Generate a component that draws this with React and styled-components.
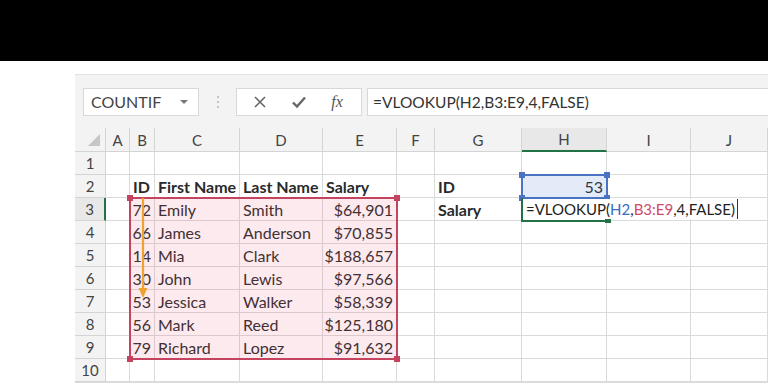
import React from 'react'
import styled, { createGlobalStyle } from 'styled-components'

const GlobalStyle = createGlobalStyle`
  body {
    margin: 0;
    background: #fff;
    font-family: Lato, "Noto Sans", sans-serif;
    overflow: hidden;
  }
`

const TopBar = styled.div`
  height: 61px;
  background: #000;
`

const Stage = styled.div`
  padding: 13px 0 0 75px;
`

const Sheet = styled.div`
  background: #f3f3f3;
  border-top: 1px solid #e2e2e2;
`

const Toolbar = styled.div`
  display: flex;
  align-items: center;
  height: 53px;
  padding-left: 8px;
`

const NameBox = styled.div`
  display: flex;
  align-items: center;
  justify-content: space-between;
  box-sizing: border-box;
  width: 116px;
  height: 28px;
  padding: 0 10px 0 7px;
  background: #fff;
  border: 1px solid #d8d8d8;
  color: #444;
  font-size: 16px;
`

const Caret = styled.span`
  width: 0;
  height: 0;
  border-left: 4px solid transparent;
  border-right: 4px solid transparent;
  border-top: 4px solid #777;
`

const Grip = styled.div`
  display: flex;
  flex-direction: column;
  align-items: center;
  gap: 3px;
  width: 37px;

  span {
    width: 2px;
    height: 2px;
    background: #c4c4c4;
  }
`

const FxButtons = styled.div`
  display: flex;
  align-items: center;
  justify-content: space-around;
  box-sizing: border-box;
  width: 126px;
  height: 28px;
  padding: 0 6px 0 4px;
  background: #fff;
  border: 1px solid #d8d8d8;
  color: #666;
`

const Fx = styled.span`
  font-family: "Liberation Serif", serif;
  font-style: italic;
  font-size: 16px;
  color: #555;
`

const FormulaInput = styled.div`
  display: flex;
  align-items: center;
  flex: 1;
  box-sizing: border-box;
  height: 28px;
  margin-left: 5px;
  padding-left: 5px;
  background: #fff;
  border: 1px solid #d8d8d8;
  border-right: none;
  color: #333;
  font-size: 15.5px;
`

const Grid = styled.div`
  position: relative;
  display: grid;
  grid-template-columns: 31px 24px 25px 85px 83px 74px 38px 87px 85px 84px 1fr;
  grid-template-rows: 24px repeat(10, 23px);
  background: #fff;
  border-bottom: 1px solid #dcdcdc;
`

const Corner = styled.div`
  position: relative;
  background: #f3f3f3;
  border-right: 1px solid #d4d4d4;
  border-bottom: 1px solid #d4d4d4;

  &::after {
    content: '';
    position: absolute;
    right: 5px;
    bottom: 5px;
    border-left: 12px solid transparent;
    border-bottom: 12px solid #c6c6c6;
  }
`

const ColHeader = styled.div`
  display: flex;
  align-items: center;
  justify-content: center;
  box-sizing: border-box;
  background: ${p => (p.$active ? '#e8e8e8' : '#f3f3f3')};
  border-right: 1px solid #d4d4d4;
  border-bottom: ${p => (p.$active ? '2px solid #217346' : '1px solid #d4d4d4')};
  color: #444;
  font-size: 15px;
`

const RowHeader = styled.div`
  display: flex;
  align-items: center;
  justify-content: center;
  box-sizing: border-box;
  background: ${p => (p.$active ? '#e8e8e8' : '#f3f3f3')};
  border-right: ${p => (p.$active ? '2px solid #217346' : '1px solid #d4d4d4')};
  border-bottom: 1px solid #d4d4d4;
  color: #444;
  font-size: 15px;
`

const Cell = styled.div`
  display: flex;
  align-items: center;
  justify-content: ${p => (p.$right ? 'flex-end' : 'flex-start')};
  box-sizing: border-box;
  padding: 0 3px;
  border-right: 1px solid #dadada;
  border-bottom: 1px solid #dadada;
  color: #2a2a2a;
  font-size: 16px;
  font-weight: ${p => (p.$bold ? 700 : 400)};
  white-space: nowrap;
`

const Range = styled.div`
  position: absolute;
  box-sizing: border-box;
  border: 2px solid ${p => p.$color};
  background: ${p => p.$fill || 'transparent'};
  pointer-events: none;
`

const Handle = styled.span`
  position: absolute;
  width: 6px;
  height: 6px;
  background: ${p => p.$color};
`

const EditText = styled.div`
  position: absolute;
  display: flex;
  align-items: center;
  height: 20px;
  padding: 0 2px 0 3px;
  background: #fff;
  color: #222;
  font-size: 15px;
  white-space: nowrap;
  border-right: 1px solid #333;
`

const Ref = styled.span`
  color: ${p => p.$color};
`

const ArrowSvg = styled.svg`
  position: absolute;
  overflow: visible;
`

const cols = ['A', 'B', 'C', 'D', 'E', 'F', 'G', 'H', 'I', 'J']

const rows = [
  { id: 72, first: 'Emily', last: 'Smith', salary: '$64,901' },
  { id: 66, first: 'James', last: 'Anderson', salary: '$70,855' },
  { id: 14, first: 'Mia', last: 'Clark', salary: '$188,657' },
  { id: 30, first: 'John', last: 'Lewis', salary: '$97,566' },
  { id: 53, first: 'Jessica', last: 'Walker', salary: '$58,339' },
  { id: 56, first: 'Mark', last: 'Reed', salary: '$125,180' },
  { id: 79, first: 'Richard', last: 'Lopez', salary: '$91,632' },
]

function rowCells(n) {
  const empty = Array(10).fill(null)
  if (n === 2) {
    empty[1] = { text: 'ID', bold: true }
    empty[2] = { text: 'First Name', bold: true }
    empty[3] = { text: 'Last Name', bold: true }
    empty[4] = { text: 'Salary', bold: true }
    empty[6] = { text: 'ID', bold: true }
    empty[7] = { text: '53', right: true }
  }
  if (n === 3) empty[6] = { text: 'Salary', bold: true }
  const r = rows[n - 3]
  if (r) {
    empty[1] = { text: r.id, right: true }
    empty[2] = { text: r.first }
    empty[3] = { text: r.last }
    empty[4] = { text: r.salary, right: true }
  }
  return empty
}

const Corners = ({ color, w, h }) => (
  <>
    <Handle $color={color} style={{ left: -4, top: -4 }} />
    <Handle $color={color} style={{ left: w - 4, top: -4 }} />
    <Handle $color={color} style={{ left: -4, top: h - 4 }} />
    <Handle $color={color} style={{ left: w - 4, top: h - 4 }} />
  </>
)

const XIcon = () => (
  <svg width="14" height="14" viewBox="0 0 14 14" fill="none" stroke="#666" strokeWidth="1.6">
    <path d="M2 2 L12 12 M12 2 L2 12" />
  </svg>
)

const CheckIcon = () => (
  <svg width="16" height="14" viewBox="0 0 16 14" fill="none" stroke="#666" strokeWidth="2.4">
    <path d="M2 7.5 L6 11.5 L14 2.5" />
  </svg>
)

const App = () => (
  <>
    <GlobalStyle />
    <TopBar />
    <Stage>
      <Sheet>
        <Toolbar>
          <NameBox>
            COUNTIF
            <Caret />
          </NameBox>
          <Grip>
            <span />
            <span />
            <span />
          </Grip>
          <FxButtons>
            <XIcon />
            <CheckIcon />
            <Fx>fx</Fx>
          </FxButtons>
          <FormulaInput>=VLOOKUP(H2,B3:E9,4,FALSE)</FormulaInput>
        </Toolbar>
        <Grid>
          <Corner />
          {cols.map(c => (
            <ColHeader key={c} $active={c === 'H'}>
              {c}
            </ColHeader>
          ))}
          {Array.from({ length: 10 }, (_, i) => i + 1).map(n => (
            <React.Fragment key={n}>
              <RowHeader $active={n === 3}>{n}</RowHeader>
              {rowCells(n).map((c, j) => (
                <Cell key={j} $bold={c && c.bold} $right={c && c.right}>
                  {c ? c.text : ''}
                </Cell>
              ))}
            </React.Fragment>
          ))}

          <Range
            $color="#c4435e"
            $fill="rgba(232, 96, 120, 0.13)"
            style={{ left: 54, top: 69, width: 269, height: 163 }}
          >
            <Corners color="#c4435e" w={267} h={161} />
          </Range>

          <ArrowSvg width="12" height="100" style={{ left: 62, top: 70 }}>
            <path d="M6 0 L6 94" stroke="#f0a22e" strokeWidth="2.2" />
            <path d="M1.5 90 L6 100 L10.5 90 Z" fill="#f0a22e" />
          </ArrowSvg>

          <Range
            $color="#4a73c4"
            $fill="rgba(80, 130, 220, 0.16)"
            style={{ left: 446, top: 46, width: 87, height: 25 }}
          >
            <Corners color="#4a73c4" w={85} h={23} />
          </Range>

          <Range
            $color="#217346"
            style={{ left: 446, top: 70, width: 87, height: 24, borderTop: 'none', borderRight: 'none' }}
          >
            <Handle $color="#217346" style={{ left: 82, top: 19 }} />
          </Range>

          <EditText style={{ left: 448, top: 71 }}>
            =VLOOKUP(<Ref $color="#3a6cc2">H2</Ref>,<Ref $color="#d04a68">B3:E9</Ref>,4,FALSE)
          </EditText>
        </Grid>
      </Sheet>
    </Stage>
  </>
)

export default App
